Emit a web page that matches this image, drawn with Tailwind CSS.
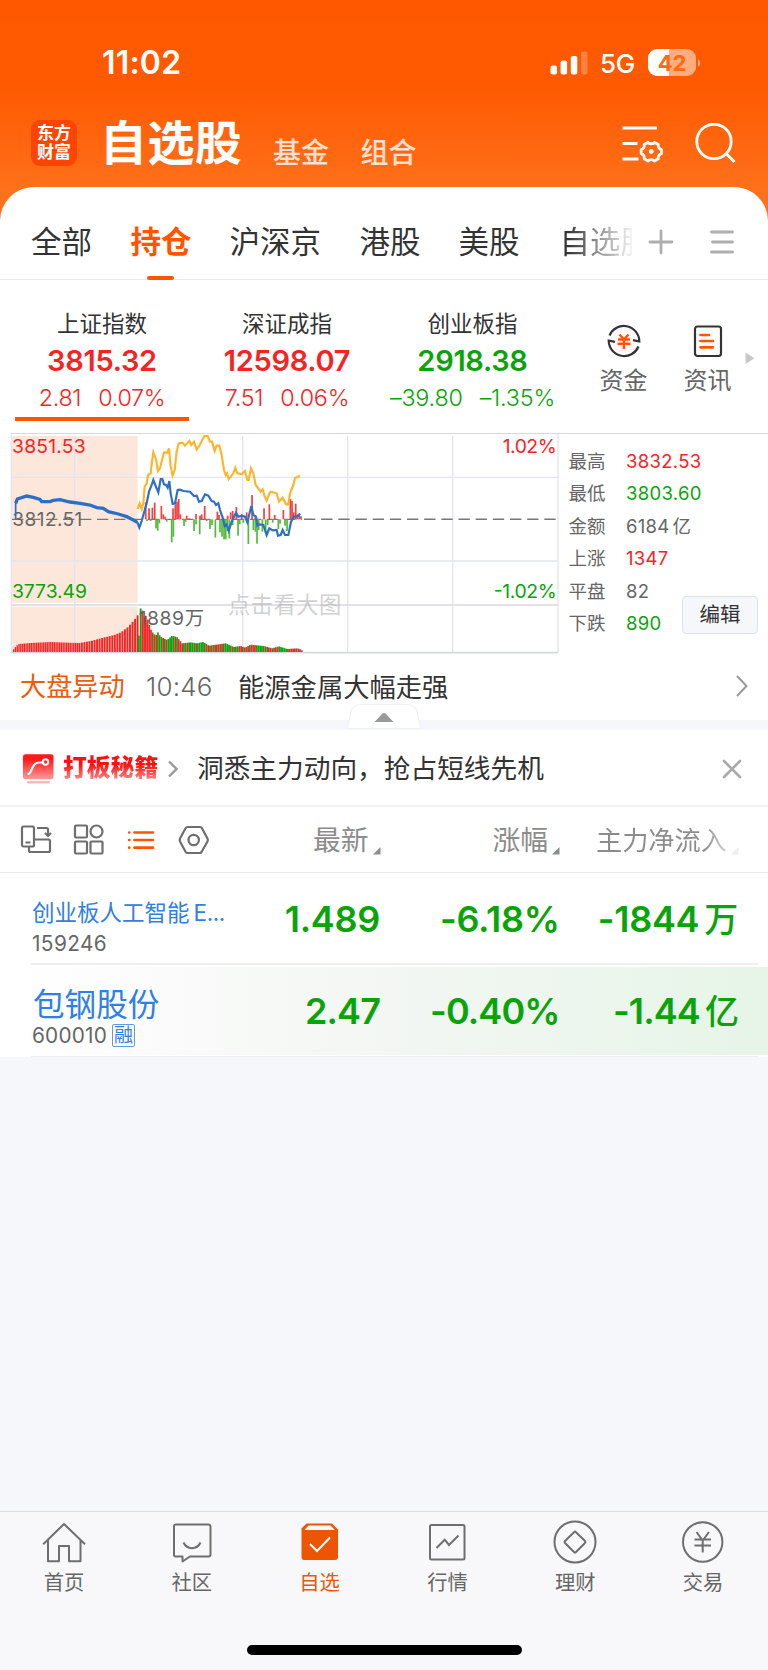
<!DOCTYPE html>
<html lang="zh-CN">
<head>
<meta charset="utf-8">
<title>自选股</title>
<script src="https://cdn.jsdelivr.net/npm/@tailwindcss/browser@4"></script>
</head>
<body class="w-[768px] h-[1670px] overflow-hidden bg-[#f6f7fb] font-['Inter','Noto_Sans_CJK_SC',sans-serif] leading-none text-[#333] whitespace-nowrap">
<div class="w-[768px] h-[1670px] flex flex-col">

  <!-- Header -->
  <div class="h-[1057px] shrink-0 bg-[linear-gradient(to_bottom,#ff5800_0px,#ff5901_85px,#ff7019_187px,#ff7420_240px,#fff_241px)]">
    <div class="h-[125px] flex items-center">
      <span class="ml-[102px] w-[448px] text-[32px] font-semibold text-white tracking-[0.2px]">11:02</span>
      <svg class="w-[39px] h-[24px]" viewBox="0 0 39 24" fill="#fff"><rect x="0.5" y="14.5" width="6.5" height="9" rx="2"/><rect x="10.6" y="9.5" width="6.5" height="14" rx="2"/><rect x="20.8" y="5" width="6.5" height="18.5" rx="2"/><rect x="31" y="0.5" width="6.5" height="23" rx="2" opacity=".25"/></svg>
      <span class="ml-[11px] w-[48px] text-[26px] font-medium text-white tracking-[-0.2px] pt-[2px]">5G</span>
      <div class="w-[48px] h-[27px] rounded-[9px] flex items-center justify-center bg-[linear-gradient(to_right,#fff_21px,#ffac80_21px)] text-[22px] font-bold text-[#ff6a0c]">42</div>
      <svg class="w-[4px] h-[10px] ml-[2px]" viewBox="0 0 4 10"><path d="M0 1.5C3 2.500 3 7.500 0 8.500Z" fill="#ffac80"/></svg>
    </div>
    <div class="h-[62px] flex items-start text-white">
      <div class="ml-[31px] -mt-[5px] w-[46px] h-[46px] shrink-0 rounded-[9px] bg-[#ff4400] flex flex-col items-center justify-center text-[17px] font-bold leading-[19px]"><span>东方</span><span>财富</span></div>
      <span class="ml-[23px] -mt-[5px] w-[173px] shrink-0 text-[47px] font-bold leading-[46px] tracking-[0.4px]">自选股</span>
      <span class="mt-[14px] w-[87.500px] shrink-0 text-[28px] leading-[28px] font-medium text-white/80">基金</span>
      <span class="mt-[14px] w-[260px] shrink-0 text-[28px] leading-[28px] font-medium text-white/80">组合</span>
      <svg class="w-[42px] h-[40px] shrink-0" viewBox="0 0 42 40" fill="none" stroke="#fff" stroke-width="2.800"><path d="M1.500 3H36M1.500 18.500H16.500M1.500 34H17.500"/><path d="M27 17.300C28 19.200 32.500 19.200 33.500 17.300L37.300 19.400C36.700 21.700 38.200 24.300 40.500 24.600V28.600C38.200 29 36.700 31.600 37.300 33.800L33.500 36C32 34.200 28.500 34.200 27 36L23.200 33.800C23.800 31.600 22.300 29 20.200 28.600V24.600C22.300 24.300 23.800 21.700 23.200 19.400Z" stroke-linejoin="round"/><circle cx="30.300" cy="26.500" r="2.400" fill="#fff" stroke="none"/></svg>
      <svg class="w-[42px] h-[42px] shrink-0 ml-[31px] -mt-[2px]" viewBox="0 0 42 42" fill="none" stroke="#fff" stroke-width="2.800"><circle cx="20" cy="18.500" r="17.200"/><path d="M32 30.500L40.500 39"/></svg>
    </div>

    <!-- Tabs -->
    <div class="h-[870px] rounded-t-[34px] bg-white overflow-hidden">
      <div class="h-[93px] pt-[18px] border-b border-[#e9e9e9] flex items-center text-[30.500px]">
        <span class="ml-[31px] w-[99.500px] shrink-0">全部</span>
        <div class="relative w-[99px] shrink-0 font-bold text-[#ff5500]">持仓<div class="absolute left-[16.500px] top-[49px] w-[27px] h-[4px] rounded-[2px] bg-[#ff5500]"></div></div>
        <span class="w-[130px] shrink-0">沪深京</span>
        <span class="w-[99px] shrink-0">港股</span>
        <span class="w-[101px] shrink-0">美股</span>
        <span class="w-[72px] shrink-0 overflow-hidden leading-[36px] text-transparent bg-clip-text bg-[linear-gradient(to_right,#333_8px,#888_35px,#fff_76px)]">自选股</span>
        <svg class="ml-[16px] w-[26px] h-[26px] shrink-0" viewBox="0 0 26 26" stroke="#aeaeae" stroke-width="2.800" stroke-linecap="round"><path d="M2 13H24M13 2V24"/></svg>
        <svg class="ml-[35px] w-[26px] h-[26px] shrink-0" viewBox="0 0 26 26" stroke="#aeaeae" stroke-width="2.800" stroke-linecap="round"><path d="M2.500 3H23.500M3.500 13H23.500M2.500 23H23.500"/></svg>
      </div>

      <!-- Indices -->
      <div class="h-[153px] flex">
        <div class="ml-[9.500px] w-[185px] flex flex-col items-center text-[#f52424]">
          <span class="mt-[31px] h-[24px] leading-[25px] text-[22.500px] text-[#333]">上证指数</span>
          <span class="h-[52px] leading-[51px] text-[29px] font-semibold tracking-[-0.3px]">3815.32</span>
          <span class="h-[20px] leading-[21px] text-[23.300px] font-[350] tracking-[-0.300px] flex gap-[17px]"><span>2.81</span><span>0.07%</span></span>
          <div class="mt-[10px] w-[174px] h-[4px] bg-[#ff5500]"></div>
        </div>
        <div class="w-[185px] flex flex-col items-center text-[#f52424]">
          <span class="mt-[31px] h-[24px] leading-[25px] text-[22.500px] text-[#333]">深证成指</span>
          <span class="h-[52px] leading-[51px] text-[29px] font-semibold tracking-[-0.3px]">12598.07</span>
          <span class="h-[20px] leading-[21px] text-[23.300px] font-[350] tracking-[-0.200px] flex gap-[17px]"><span>7.51</span><span>0.06%</span></span>
        </div>
        <div class="w-[186px] flex flex-col items-center text-[#0aa40a]">
          <span class="mt-[31px] h-[24px] leading-[25px] text-[22.500px] text-[#333]">创业板指</span>
          <span class="h-[52px] leading-[51px] text-[29px] font-semibold tracking-[-0.3px]">2918.38</span>
          <span class="h-[20px] leading-[21px] text-[23.300px] font-[350] tracking-[-0.200px] flex gap-[17px]"><span>–39.80</span><span>–1.35%</span></span>
        </div>
        <div class="ml-[16px] w-[84px] flex flex-col items-center">
          <svg class="mt-[43px] w-[36px] h-[36px]" viewBox="0 0 36 36" fill="none" stroke="#333" stroke-width="2.200"><path d="M3.500 12.500A15.500 15.500 0 0 1 33.300 18.500L27 17.200"/><path d="M32.500 23.500A15.500 15.500 0 0 1 2.700 17.500L9 18.800"/><path d="M13.500 11.500L18 16.500L22.500 11.500M18 16.500V26M12 16.500H24M11.500 20.800H24.500" stroke="#ff5500" stroke-width="2.500"/></svg>
          <span class="mt-[10px] leading-[24px] text-[24px] text-[#666]">资金</span>
        </div>
        <div class="w-[84px] flex flex-col items-center">
          <svg class="mt-[43px] w-[36px] h-[36px]" viewBox="0 0 36 36" fill="none" stroke="#333" stroke-width="2.200"><rect x="5" y="3.500" width="26" height="29.500" rx="2.500"/><path d="M10.500 12H19M10.500 18H23M10.500 24.300H23" stroke="#ff5500" stroke-width="2.700" stroke-linecap="round"/></svg>
          <span class="mt-[10px] leading-[24px] text-[24px] text-[#666]">资讯</span>
        </div>
        <svg class="-ml-[5px] mt-[72px] w-[10px] h-[12px]" viewBox="0 0 10 12"><path d="M0.500 0.500L9.500 6.200L0.500 12Z" fill="#c8c8c8"/></svg>
      </div>

      <!-- Chart -->
      <div class="relative h-[227px] flex">
        <svg id="chart" class="absolute left-0 -top-[8px] w-[560px] h-[235px]" viewBox="0 0 1680 705" font-family="Inter, 'Noto Sans CJK SC', sans-serif">
          <rect x="36" y="33" width="377" height="500" fill="#fde6da"/>
          <rect x="36" y="545" width="377" height="136" fill="#fde6da"/>
          <g stroke="#e2e5ee" stroke-width="4" fill="none">
            <path d="M224 33V681M728 33V681M1043 33V681M1358 33V681"/>
            <path d="M36 157H1674M36 408H1674"/><path d="M34 24V684M1674 24V684"/>
            <path d="M34 540H1674M34 683H1674" stroke="#d6d9e0" stroke-width="5"/>
          </g>
          <g font-size="58">
            <text x="36" y="83" fill="#f52424" textLength="221">3851.53</text>
            <text x="36" y="518" fill="#0aa40a" textLength="225">3773.49</text>
            <text x="1670" y="83" fill="#f52424" text-anchor="end" textLength="162">1.02%</text>
            <text x="1670" y="518" fill="#0aa40a" text-anchor="end" textLength="189">-1.02%</text>
          </g>
          <path d="M36 283H905" stroke="#777" stroke-width="3.500" stroke-dasharray="34 17"/>
          <path d="M912 283H1670" stroke="#777" stroke-width="4.500" stroke-dasharray="34 17.500"/>
          <text x="37" y="302" font-size="57" fill="#666" textLength="210">3812.51</text>
          <g id="ticks"></g>
          <g id="volume"></g>
          <path d="M47 283V235L52 222L65 218L80 213L100 217L120 223L125 230L150 230L160 226L180 224L210 231L240 235L270 240L290 248L310 250L325 260L355 267L380 275L400 285L412 292" fill="none" stroke="#2e6fc4" stroke-width="5"/>
          <path d="M47 235L52 222L65 218L80 213L100 217L120 223L125 230L150 230L160 226L180 224L210 231L240 235L270 240L290 248L310 250L325 260L355 267L380 275L400 285L412 292" fill="none" stroke="#2e6fc4" stroke-width="10"/>
          <path d="M412 292L418 308L425 288L430 270L440 235L447 200L455 180L460 165L467 183L475 202L482 162L487 162L492 178L498 180L503 188L508 168L512 205L518 237L525 235L533 195L540 194L550 198L570 200L582 213L590 212L597 230L605 228L615 208L625 212L635 228L642 230L648 240L655 235L660 255L668 278L674 303L680 298L686 317L697 285L708 263L715 275L725 272L735 275L742 292L754 243L760 270L768 275L772 302L778 298L790 300L800 330L808 310L818 316L830 315L834 332L842 330L848 315L855 330L865 330L873 290L882 275L895 273L900 265" fill="none" stroke="#2e6fc4" stroke-width="6.500"/>
          <path d="M413 252L419 235L425 252L430 235L434 185L440 175L444 150L452 145L456 110L460 82L468 103L474 138L480 130L486 105L492 82L502 83L507 70L512 125L518 152L524 135L530 80L536 55L548 53L555 62L568 48L574 60L582 50L590 73L598 62L604 50L613 33L623 33L630 50L636 50L644 78L650 62L658 62L665 90L672 135L677 150L681 145L686 162L692 155L700 145L706 128L712 145L725 147L735 138L742 165L746 165L753 130L760 145L767 180L775 190L782 200L788 193L794 215L800 227L808 205L813 200L830 205L837 230L848 218L858 238L865 238L870 205L880 180L885 160L900 152" fill="none" stroke="#fdb62b" stroke-width="6.500"/>
          <text x="416" y="600" font-size="58" fill="#666" textLength="196">1889万</text>
          <text x="684" y="564" font-size="67" fill="#a9a9a9" fill-opacity=".55" textLength="340">点击看大图</text>
        </svg>
        <div class="absolute left-[11px] top-0 w-[757px] h-px bg-[#d6d9e0]"></div>
        <div class="ml-[568.500px] mt-[11.500px] w-[113.500px] shrink-0 text-[18.500px] text-[#666] tracking-[0.300px]">
          <div class="h-[32.500px] flex items-center"><span class="w-[57.500px] shrink-0 tracking-normal">最高</span><span class="text-[#f52424]">3832.53</span></div>
          <div class="h-[32.500px] flex items-center"><span class="w-[57.500px] shrink-0 tracking-normal">最低</span><span class="text-[#0aa40a]">3803.60</span></div>
          <div class="h-[32.500px] flex items-center"><span class="w-[57.500px] shrink-0 tracking-normal">金额</span><span>6184<span class="ml-[3px]">亿</span></span></div>
          <div class="h-[32.500px] flex items-center"><span class="w-[57.500px] shrink-0 tracking-normal">上涨</span><span class="text-[#f52424]">1347</span></div>
          <div class="h-[32.500px] flex items-center"><span class="w-[57.500px] shrink-0 tracking-normal">平盘</span><span>82</span></div>
          <div class="h-[32.500px] flex items-center"><span class="w-[57.500px] shrink-0 tracking-normal">下跌</span><span class="text-[#0aa40a]">890</span></div>
        </div>
        <div class="mt-[163px] w-[76px] h-[38px] shrink-0 rounded-[4px] border border-[#dfe2ea] bg-[#f6f7fb] flex items-center justify-center pt-px text-[20.500px]">编辑</div>
      </div>

      <!-- News -->
      <div class="h-[60px] flex items-center pb-[3px]">
        <span class="ml-[20px] w-[126px] text-[26.200px] text-[#ef5a0c] -mt-[2px]">大盘异动</span>
        <span class="w-[92px] text-[26px] font-[350] text-[#666] -mt-[3px] tracking-[0.200px]">10:46</span>
        <span class="w-[498px] text-[26.300px]">能源金属大幅走强</span>
        <svg class="w-[12px] h-[22px] -mt-[5px]" viewBox="0 0 12 22" fill="none" stroke="#999" stroke-width="2"><path d="M1 1L10.500 11L1 21"/></svg>
      </div>
      <div class="relative h-[10px] bg-[#f6f7fb]">
        <svg class="absolute left-[346px] -top-[18px] w-[76px] h-[28px]" viewBox="0 0 76 28"><path d="M1.500 26.500L5 9Q7 2.500 14 2.500H62Q69 2.500 71 9L74.500 26.500Z" fill="#fff" stroke="#f0f1f3" stroke-width="1.200"/><path d="M28.500 20L36 12Q38 10 40 12L47.500 20Z" fill="#999"/></svg>
      </div>

      <!-- Promo -->
      <div class="h-[77px] border-b-2 border-[#f3f3f5] flex items-center">
        <svg class="ml-[23px] mt-[2px] w-[31px] h-[30px]" viewBox="0 0 31 30"><defs><linearGradient id="g" x1="0" y1="0" x2="0" y2="1"><stop offset="0.200" stop-color="#ff1a1a"/><stop offset="1" stop-color="#ff9a9a"/></linearGradient></defs><rect width="30.500" height="25" rx="2.500" y="0.300" fill="url(#g)"/><rect x="4" y="27" width="23" height="2.500" rx="1.200" fill="#ffb9b9"/><path d="M5.500 20C9 19 9 8.500 15.500 8.500H19.500" fill="none" stroke="#fff" stroke-width="2.200" stroke-linecap="round"/><circle cx="22.500" cy="8" r="2.700" fill="none" stroke="#fff" stroke-width="2"/></svg>
        <span class="ml-[9px] w-[105px] mt-px text-[23.800px] leading-[32px] font-black text-transparent bg-clip-text bg-[linear-gradient(to_bottom,#ff1010_40%,#ff9090_90%)]">打板秘籍</span>
        <svg class="w-[10px] h-[18px] mt-[2px]" viewBox="0 0 10 18" fill="none" stroke="#999" stroke-width="2.400"><path d="M1 1.500L8.500 9L1 16.500"/></svg>
        <span class="ml-[19px] w-[525px] mt-[2px] text-[26.700px]">洞悉主力动向，抢占短线先机</span>
        <svg class="w-[20px] h-[20px] mt-[2px]" viewBox="0 0 20 20" stroke="#aaa" stroke-width="2.600" stroke-linecap="round"><path d="M2 2L18 18M18 2L2 18"/></svg>
      </div>

      <!-- Column headings -->
      <div class="h-[66px] border-b border-[#e9e9e9] flex items-center text-[#8c8c8c]">
        <svg class="ml-[19.500px] w-[32px] h-[32px] shrink-0" viewBox="0 0 32 32" fill="none" stroke="#6e6e6e" stroke-width="2.200"><rect x="2" y="2.500" width="12" height="20" rx="1.500"/><path d="M5.500 18.500H10.500M17 4H26.500Q28 4 28 5.500V11M25 9L28 12L31 9M14 15.500H28.500Q30 15.500 30 17V26.500Q30 28 28.500 28H10.500Q9 28 9 26.500V22.500"/></svg>
        <svg class="ml-[21px] w-[32px] h-[32px] shrink-0" viewBox="0 0 32 32" fill="none" stroke="#6e6e6e" stroke-width="2.200"><rect x="2" y="1.500" width="12" height="12" rx="1"/><circle cx="23.500" cy="7.500" r="6"/><rect x="2" y="17.500" width="12" height="12" rx="1"/><rect x="17.500" y="17.500" width="12" height="12" rx="1"/></svg>
        <svg class="ml-[22px] w-[30px] h-[32px] shrink-0" viewBox="0 0 30 32" fill="none" stroke="#ff5500" stroke-width="2.700" stroke-linecap="round"><path d="M7.500 8.500H26M7.500 16H26M7.500 23.700H26M2.200 8.500H2.300M2.200 16H2.300M2.200 23.700H2.300"/></svg>
        <svg class="ml-[21px] w-[32px] h-[32px] shrink-0" viewBox="0 0 32 32" fill="none" stroke="#6e6e6e" stroke-width="2.200" stroke-linejoin="round"><path d="M9.500 3H22Q23.200 3 23.800 4L29.500 14.500Q30.200 16 29.500 17.500L23.800 27.500Q23.200 29 22 29H9.500Q8.300 29 7.700 28L2 17.500Q1.300 16 2 14.500L7.700 4Q8.300 3 9.500 3Z"/><circle cx="15.700" cy="16" r="5.200"/></svg>
        <span class="ml-[103.500px] w-[59.500px] shrink-0 mt-[2px] text-[27.800px]">最新</span>
        <svg class="w-[8px] h-[8px] mt-[22px] shrink-0" viewBox="0 0 8 8"><path d="M7.500 0V7.500H0Z" fill="#8c8c94"/></svg>
        <span class="ml-[112px] w-[59px] shrink-0 mt-[2px] text-[27.800px]">涨幅</span>
        <svg class="w-[8px] h-[8px] mt-[22px] shrink-0" viewBox="0 0 8 8"><path d="M7.500 0V7.500H0Z" fill="#8c8c94"/></svg>
        <span class="ml-[36.500px] w-[135px] shrink-0 mt-[2px] text-[26.200px] leading-[34px] text-transparent bg-clip-text bg-[linear-gradient(to_right,#8c8c8c_108px,#e0e0e0_134px)]">主力净流入</span>
        <svg class="w-[8px] h-[8px] mt-[22px] shrink-0" viewBox="0 0 8 8"><path d="M7.500 0V7.500H0Z" fill="#ededef"/></svg>
      </div>

      <!-- Rows -->
      <div class="h-[93px] flex text-[#0aa40a]">
        <div class="ml-[31px] w-[727px] h-[92px] border-b-2 border-[#eeeff1] flex">
          <div class="ml-px w-[228px] shrink-0 flex flex-col">
            <span class="mt-[28px] text-[22.500px] leading-[24px] text-[#2f80e6]">创业板人工智能<span class="ml-[4px] tracking-[-0.400px]">E...</span></span>
            <span class="mt-[8.500px] text-[20.800px] leading-[20px] text-[#666] tracking-[0.400px]">159246</span>
          </div>
          <div class="shrink-0 flex pt-[27px] text-[36px] leading-[38px] font-semibold tracking-[-0.300px]">
            <span class="w-[120px] text-right">1.489</span>
            <span class="w-[179.500px] text-right">-6.18%</span>
            <span class="w-[178.500px] text-right">-1844<span class="ml-[5px] text-[34px] font-medium">万</span></span>
          </div>
        </div>
      </div>
      <div class="h-[91px] pt-px flex flex-col">
        <div class="w-[768px] h-[87.500px] bg-[linear-gradient(to_right,#fff_0%,#f3f6f3_50%,#e6f5e7_100%)] flex text-[#0aa40a]">
          <div class="ml-[32px] w-[228px] flex flex-col">
            <span class="mt-[22px] ml-px text-[31.600px] leading-[32px] text-[#2f80e6]">包钢股份</span>
            <span class="mt-[3px] flex items-center"><span class="text-[20.800px] leading-[23px] text-[#666] tracking-[0.200px]">600010</span><span class="ml-[5px] w-[23px] h-[23px] border border-[#5b9bec] rounded-[2px] flex items-center justify-center text-[19px] leading-none text-[#2f80e6]">融</span></span>
          </div>
          <div class="flex pt-[25px] text-[36px] leading-[38px] font-semibold tracking-[-0.900px]">
            <span class="w-[120px] text-right">2.47</span>
            <span class="w-[179.500px] text-right">-0.40%</span>
            <span class="w-[178.500px] text-right">-1.44<span class="ml-[5px] text-[34px] font-medium">亿</span></span>
          </div>
        </div>
        <div class="ml-[31px] mt-px w-[727px] h-[1.500px] bg-[#eeeff1]"></div>
      </div>
    </div>
  </div>

  <!-- Empty list area -->
  <div class="grow"></div>

  <!-- Bottom navigation -->
  <div class="h-[159px] shrink-0 bg-[#f8f8fb] border-t border-[#dfe0e3] flex flex-col items-center">
    <div class="w-full grid grid-cols-6 text-[20.300px] leading-[22px] text-[#666] text-center pr-px">
      <div class="flex flex-col items-center gap-[8px] pt-[8px]"><svg class="w-[44px] h-[44px]" viewBox="0 0 44 44" fill="none" stroke="#6e6e6e" stroke-width="2" stroke-linejoin="round"><path d="M1.200 24.200L22 4L43 24.200M6 19.800V41.200H17V26H27V41.200H38.500V19.800"/></svg>首页</div>
      <div class="flex flex-col items-center gap-[8px] pt-[8px]"><svg class="w-[44px] h-[44px]" viewBox="0 0 44 44" fill="none" stroke="#6e6e6e" stroke-width="2" stroke-linejoin="round"><path d="M5.500 4.500H38.500Q40.500 4.500 40.500 6.500V34.500Q40.500 36.500 38.500 36.500H20L12.500 41.500V36.500H5.500Q4 36.500 4 34.500V6.500Q4 4.500 5.500 4.500Z"/><path d="M13.500 22.500C17 30 27 30 30.500 22.500"/></svg>社区</div>
      <div class="flex flex-col items-center gap-[8px] pt-[8px] text-[#ef5505]"><svg class="w-[44px] h-[44px]" viewBox="0 0 44 44"><path d="M8.500 3.500H34L40 9.500V37Q40 40 37 40H6Q3.500 40 3.500 37V8.500Z" fill="#ec5504"/><path d="M10.500 5.500H32.500L37 10H6.500Z" fill="#f8f8fb"/><path d="M12 24L19 31L32 17.500" fill="none" stroke="#fff" stroke-width="2"/></svg>自选</div>
      <div class="flex flex-col items-center gap-[8px] pt-[8px]"><svg class="w-[44px] h-[44px]" viewBox="0 0 44 44" fill="none" stroke="#6e6e6e" stroke-width="2"><rect x="5" y="5" width="34.500" height="34.500" rx="1.500"/><path d="M11.500 28L19.700 19.700L24 25L33.500 15.500"/></svg>行情</div>
      <div class="flex flex-col items-center gap-[8px] pt-[8px]"><svg class="w-[44px] h-[44px]" viewBox="0 0 44 44" fill="none" stroke="#6e6e6e" stroke-width="2" stroke-linejoin="round"><circle cx="22" cy="22" r="20.500"/><path d="M21 12.200Q22 11 23 12.200L32 21Q33 22 32 23L23 32Q22 33 21 32L12 23Q11 22 12 21Z"/></svg>理财</div>
      <div class="flex flex-col items-center gap-[8px] pt-[8px]"><svg class="w-[44px] h-[44px]" viewBox="0 0 44 44" fill="none" stroke="#6e6e6e" stroke-width="2"><circle cx="21.700" cy="22" r="19.700"/><path d="M15.500 12L21.700 20.500L28 12M21.700 20V32.500M13.500 19.500H30M13.500 25.500H30"/></svg>交易</div>
    </div>
    <div class="mt-[51px] w-[275px] h-[10px] rounded-full bg-black"></div>
  </div>
</div>

<script>
const NS = 'http://www.w3.org/2000/svg';
function bar(parent, x, y, w, h, fill) {
  const r = document.createElementNS(NS, 'rect');
  Object.entries({x, y, width: w, height: h, fill}).forEach(([k, v]) => r.setAttribute(k, v));
  parent.appendChild(r);
}
// Advance/decline ticks around the previous close (x, y of the far end)
const BASE = 283, ticks = document.getElementById('ticks');
const up = [[437,232],[447,250],[457,248],[464,233],[484,243],[490,268],[495,275],[519,250],[526,238],[531,230],[536,222],[541,268],[560,272],[568,280],[588,267],[600,272],[605,268],[614,243],[652,260],[657,270],[683,272],[692,262],[698,258],[709,246],[725,268],[740,262],[756,210],[766,272],[792,250],[808,238],[824,270],[850,255],[871,222],[876,228],[881,262],[887,236],[892,268],[898,272],[903,274]];
const down = [[441,288],[452,288],[468,310],[473,317],[478,295],[500,290],[515,352],[520,335],[552,303],[557,290],[582,318],[588,298],[599,328],[620,288],[630,312],[636,300],[646,338],[660,322],[666,335],[672,343],[677,343],[682,318],[688,340],[698,300],[714,332],[719,298],[730,293],[745,357],[760,315],[766,320],[771,356],[776,315],[787,320],[797,322],[803,300],[818,293],[835,312],[840,296],[855,302],[861,318]];
up.forEach(([x, y]) => bar(ticks, x - 2.5, y, 5.2, BASE - y, '#ee4444'));
down.forEach(([x, y]) => bar(ticks, x - 2.5, BASE, 5.2, y - BASE, '#55bb3f'));
// Volume bars, interpolated between [x, top] samples
const vol = document.getElementById('volume');
const at = (pts, x) => {
  for (let i = 1; i < pts.length; i++) if (x <= pts[i][0]) {
    const [a, b] = pts[i - 1], [c, d] = pts[i];
    return b + (d - b) * (x - a) / (c - a);
  }
  return pts[pts.length - 1][1];
};
const pre = [[38,674],[46,664],[54,657],[90,654],[150,651],[200,653],[235,654],[270,648],[300,640],[340,630],[360,622],[380,607],[400,585],[412,568]];
for (let x = 39; x < 411; x += x < 230 ? 5.3 : 7.6) { const y = at(pre, x); bar(vol, x, y, x < 230 ? 4.2 : 5.8, 681 - y, '#f52424'); }
const post = [[414,632],[417,632],[420,550],[425,555],[430,575],[437,572],[443,590],[450,612],[460,628],[468,630],[472,622],[480,635],[500,645],[515,632],[530,637],[545,655],[570,652],[590,655],[608,651],[625,662],[640,660],[675,655],[700,666],[720,663],[735,668],[750,659],[790,663],[815,670],[835,664],[860,672],[890,670],[898,672],[903,676]];
const green = [[412,424],[452,460],[466,482],[488,494],[500,523],[528,532],[545,558],[562,584],[590,613],[625,630],[636,642],[650,656],[664,690],[700,712],[722,727],[742,748],[765,790],[798,803],[818,823],[832,862],[885,890]];
for (let x = 414; x < 904; x += 5.2) { const y = at(post, x + 1); bar(vol, x, y, 5.2, 681 - y, green.some(([a, b]) => x >= a && x <= b) ? '#0aa40a' : '#f52424'); }
</script>
</body>
</html>
